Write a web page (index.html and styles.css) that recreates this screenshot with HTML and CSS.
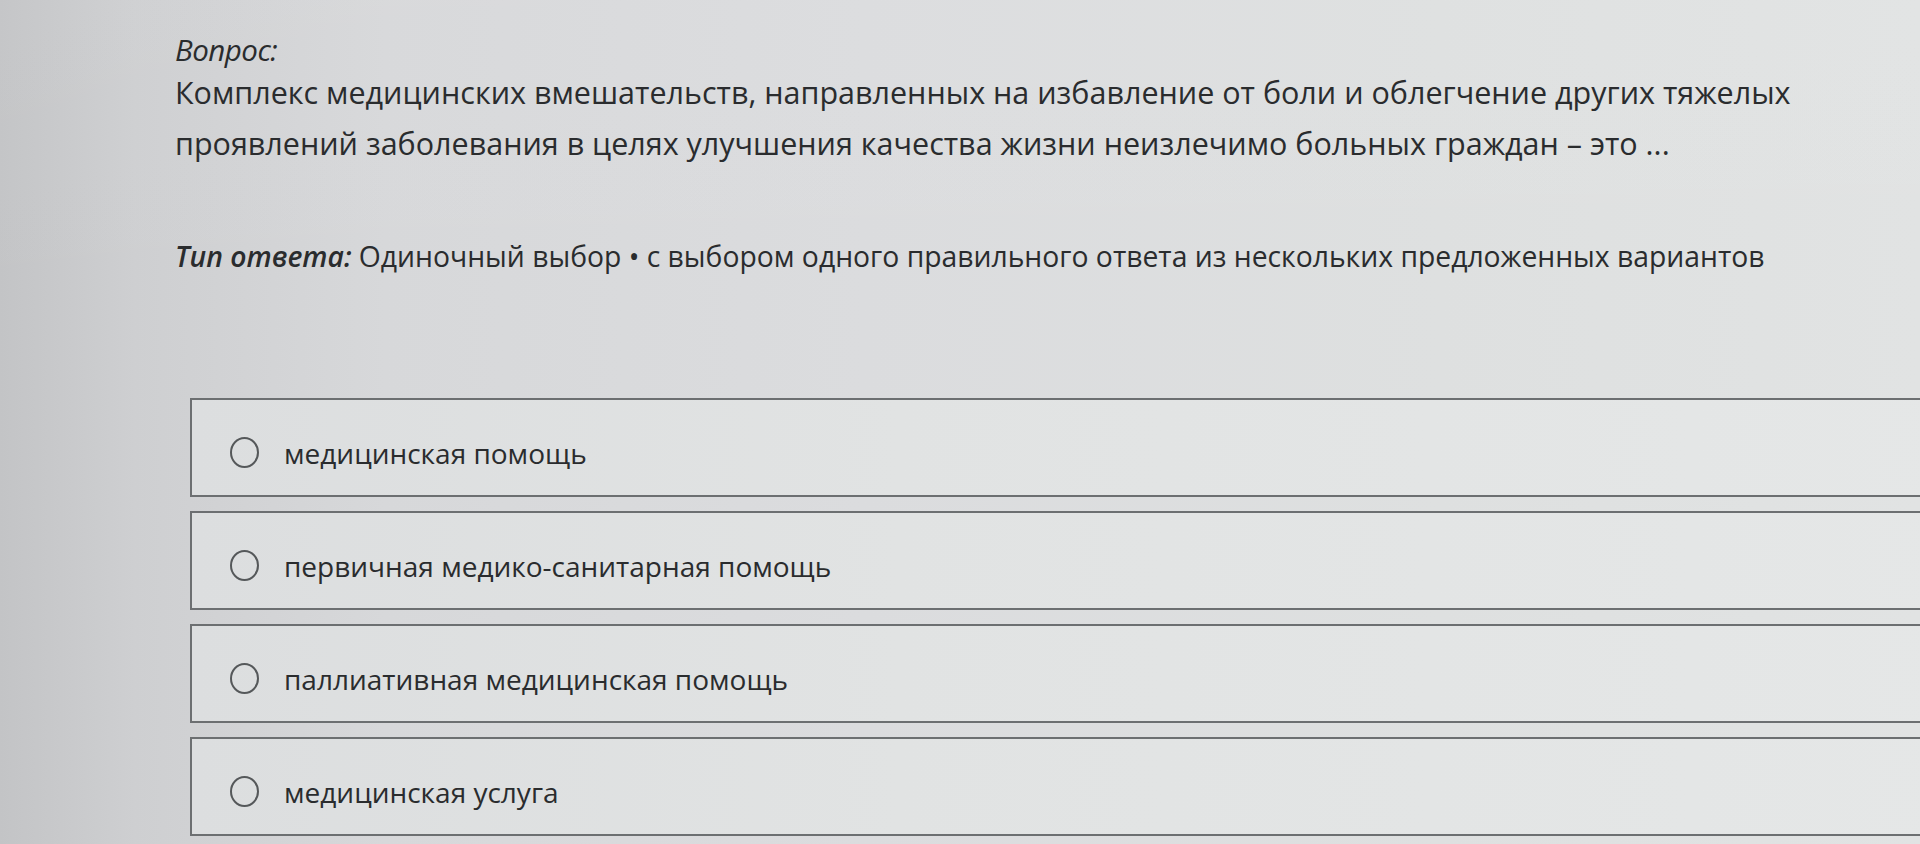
FILE: index.html
```html
<!DOCTYPE html>
<html lang="ru">
<head>
<meta charset="utf-8">
<title>Вопрос</title>
<link rel="stylesheet" href="styles.css">
</head>
<body>
<main class="page">
  <section class="question">
    <div class="q-label">Вопрос:</div>
    <p class="q-text">Комплекс медицинских вмешательств, направленных на избавление от боли и облегчение других тяжелых проявлений заболевания в целях улучшения качества жизни неизлечимо больных граждан – это ...</p>
    <p class="q-type"><span class="q-type-label">Тип ответа:</span> Одиночный выбор • с выбором одного правильного ответа из нескольких предложенных вариантов</p>
  </section>
  <ul class="options">
    <li class="option"><span class="radio"></span><span class="option-text">медицинская помощь</span></li>
    <li class="option"><span class="radio"></span><span class="option-text">первичная медико-санитарная помощь</span></li>
    <li class="option"><span class="radio"></span><span class="option-text">паллиативная медицинская помощь</span></li>
    <li class="option"><span class="radio"></span><span class="option-text">медицинская услуга</span></li>
  </ul>
</main>
</body>
</html>
```
FILE: styles.css
```css
html, body {
  margin: 0;
  padding: 0;
  height: 100%;
  overflow: hidden;
}
body {
  font-family: "Open Sans", "Noto Sans", sans-serif;
  color: #2a2c2e;
  background:
    linear-gradient(180deg, rgba(255,255,255,0.04) 0%, rgba(255,255,255,0) 40%),
    linear-gradient(90deg, #c3c4c6 0%, #cecfd1 7%, #d7d8da 20%, #dbdcde 45%, #dee0e0 75%, #e1e3e3 100%);
}
.page {
  padding: 33px 0 0 175px;
}
.question {
  display: flex;
  flex-direction: column;
}
.q-label {
  font-style: italic;
  font-size: 29.5px;
  line-height: 34px;
  letter-spacing: -0.5px;
}
.q-text {
  margin: 0;
  max-width: 1680px;
  font-size: 30.5px;
  line-height: 51px;
}
.q-type {
  margin: 67px 0 0 0;
  font-size: 28.3px;
  line-height: 40px;
}
.q-type-label {
  font-style: italic;
  font-weight: 600;
}
.options {
  list-style: none;
  margin: 122px -40px 0 15px;
  padding: 0;
  display: flex;
  flex-direction: column;
  gap: 14px;
}
.option {
  box-sizing: border-box;
  height: 99px;
  border: 2px solid #6c6f71;
  background: linear-gradient(90deg, #dcdedf 0%, #e1e3e3 40%, #e5e7e7 100%);
  display: flex;
  align-items: center;
  padding: 10px 0 0 38px;
}
.radio {
  width: 25px;
  height: 27px;
  border: 2px solid #55585a;
  border-radius: 50%;
  flex: none;
}
.option-text {
  margin-left: 25px;
  font-size: 28px;
  color: #2a2c2e;
}
```
